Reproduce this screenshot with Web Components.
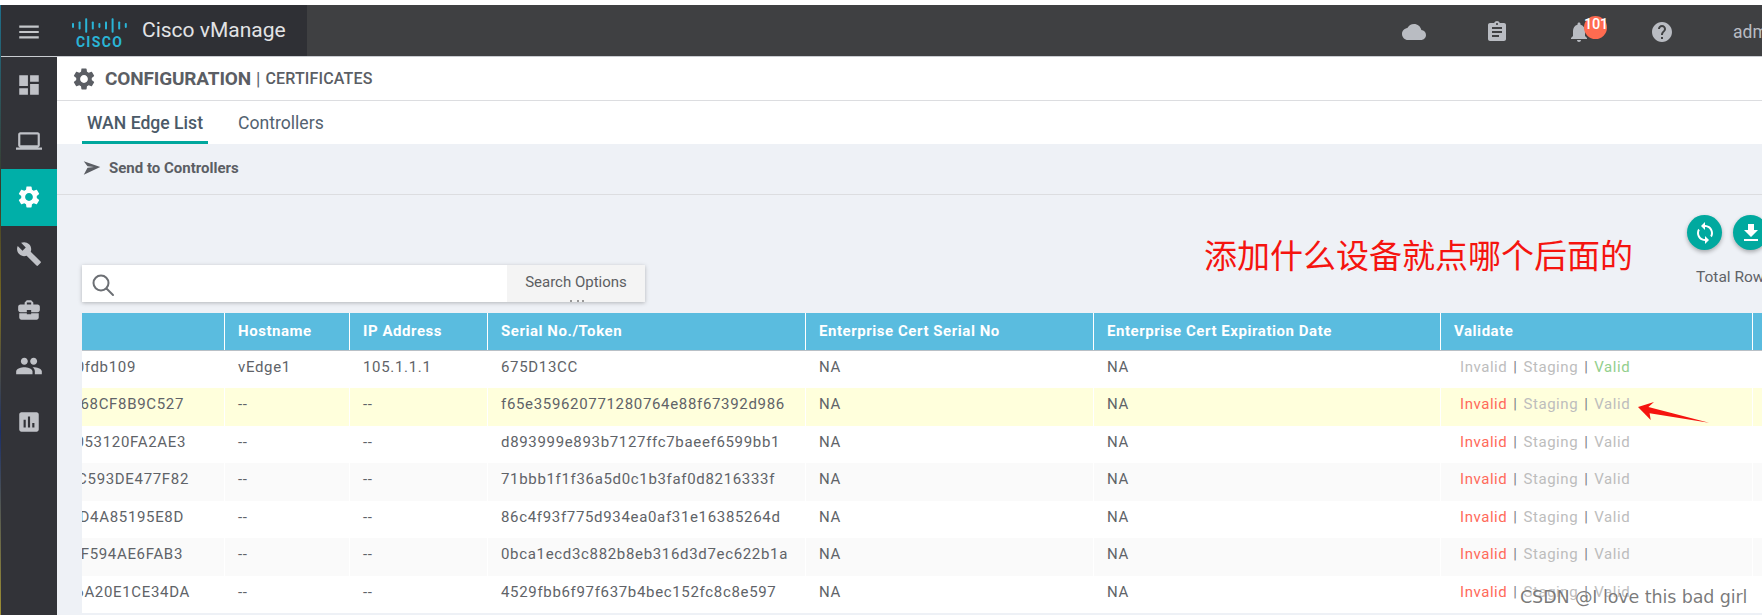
<!DOCTYPE html>
<html><head><meta charset="utf-8">
<style>
html,body{margin:0;padding:0;height:615px;width:1762px;overflow:hidden;background:#fff;font-family:Roboto,"Liberation Sans",sans-serif;}
</style></head><body>
<vm-app></vm-app>
<script>
const P={
menu:'<path d="M3 18h18v-2H3v2zm0-5h18v-2H3v2zm0-7v2h18V6H3z"/>',
dash:'<path d="M3 13h8V3H3v10zm0 8h8v-6H3v6zm10 0h8V11h-8v10zm0-18v6h8V3h-8z"/>',
laptop:'<path d="M20 18c1.1 0 2-.9 2-2V6c0-1.1-.9-2-2-2H4c-1.1 0-2 .9-2 2v10c0 1.1.9 2 2 2H0v2h24v-2h-4zM4 6h16v10H4V6z"/>',
gear:'<path d="M19.14 12.94c.04-.3.06-.61.06-.94 0-.32-.02-.64-.07-.94l2.03-1.58a.49.49 0 0 0 .12-.61l-1.92-3.32a.488.488 0 0 0-.59-.22l-2.39.96c-.5-.38-1.03-.7-1.62-.94l-.36-2.54a.484.484 0 0 0-.48-.41h-3.84c-.24 0-.43.17-.47.41l-.36 2.54c-.59.24-1.13.57-1.62.94l-2.39-.96c-.22-.08-.47 0-.59.22L2.74 8.87c-.12.21-.08.47.12.61l2.03 1.58c-.05.3-.09.63-.09.94s.02.64.07.94l-2.03 1.58a.49.49 0 0 0-.12.61l1.92 3.32c.12.22.37.29.59.22l2.39-.96c.5.38 1.03.7 1.62.94l.36 2.54c.05.24.24.41.48.41h3.84c.24 0 .44-.17.47-.41l.36-2.54c.59-.24 1.13-.56 1.62-.94l2.39.96c.22.08.47 0 .59-.22l1.92-3.32c.12-.22.07-.47-.12-.61l-2.01-1.58zM12 15.6c-1.98 0-3.6-1.62-3.6-3.6s1.62-3.6 3.6-3.6 3.6 1.62 3.6 3.6-1.62 3.6-3.6 3.6z"/>',
wrench:'<path d="M22.7 19l-9.1-9.1c.9-2.3.4-5-1.5-6.9-2-2-5-2.4-7.4-1.3L9 6 6 9 1.6 4.7C.4 7.1.9 10.1 2.9 12.1c1.9 1.9 4.6 2.4 6.9 1.5l9.1 9.1c.4.4 1 .4 1.4 0l2.3-2.3c.5-.4.5-1.1.1-1.4z"/>',
case:'<path d="M10 16v-1H3.01L3 19c0 1.11.89 2 2 2h14c1.11 0 2-.89 2-2v-4h-7v1h-4zm10-9h-4.01V5l-2-2h-4l-2 2v2H4c-1.1 0-2 .9-2 2v3c0 1.11.89 2 2 2h6v-2h4v2h6c1.1 0 2-.9 2-2V9c0-1.1-.9-2-2-2zm-6 0h-4V5h4v2z"/>',
people:'<path d="M16 11c1.66 0 2.99-1.34 2.99-3S17.66 5 16 5c-1.66 0-3 1.34-3 3s1.34 3 3 3zm-8 0c1.66 0 2.99-1.34 2.99-3S9.66 5 8 5C6.34 5 5 6.34 5 8s1.34 3 3 3zm0 2c-2.33 0-7 1.17-7 3.5V19h14v-2.5c0-2.33-4.67-3.5-7-3.5zm8 0c-.29 0-.62.02-.97.05 1.16.84 1.97 1.97 1.97 3.45V19h6v-2.5c0-2.33-4.67-3.5-7-3.5z"/>',
chart:'<path d="M19 3H5c-1.1 0-2 .9-2 2v14c0 1.1.9 2 2 2h14c1.1 0 2-.9 2-2V5c0-1.1-.9-2-2-2zM9 17H7v-7h2v7zm4 0h-2V7h2v10zm4 0h-2v-4h2v4z"/>',
cloud:'<path d="M19.35 10.04C18.67 6.59 15.64 4 12 4 9.11 4 6.6 5.64 5.35 8.04 2.34 8.36 0 10.91 0 14c0 3.31 2.69 6 6 6h13c2.76 0 5-2.24 5-5 0-2.64-2.05-4.78-4.65-4.96z"/>',
clip:'<path d="M19 3h-4.18C14.4 1.84 13.3 1 12 1c-1.3 0-2.4.84-2.82 2H5c-1.1 0-2 .9-2 2v14c0 1.1.9 2 2 2h14c1.1 0 2-.9 2-2V5c0-1.1-.9-2-2-2zm-7 0c.55 0 1 .45 1 1s-.45 1-1 1-1-.45-1-1 .45-1 1-1zm2 14H7v-2h7v2zm3-4H7v-2h10v2zm0-4H7V7h10v2z"/>',
bell:'<path d="M12 22c1.1 0 2-.9 2-2h-4c0 1.1.9 2 2 2zm6-6v-5c0-3.07-1.63-5.64-4.5-6.32V4c0-.83-.67-1.5-1.5-1.5s-1.5.67-1.5 1.5v.68C7.64 5.36 6 7.92 6 11v5l-2 2v1h16v-1l-2-2z"/>',
help:'<path d="M12 2C6.48 2 2 6.48 2 12s4.48 10 10 10 10-4.48 10-10S17.52 2 12 2zm1 17h-2v-2h2v2zm2.07-7.75l-.9.92C13.45 12.9 13 13.5 13 15h-2v-.5c0-1.1.45-2.1 1.17-2.83l1.24-1.26c.37-.36.59-.86.59-1.41 0-1.1-.9-2-2-2s-2 .9-2 2H8c0-2.21 1.79-4 4-4s4 1.79 4 4c0 .88-.36 1.68-.93 2.25z"/>',
send:'<path d="M1 3l22 7.5L1 21l5-9.5L14.5 10.5 6 9.5z"/>',
sync:'<path d="M12 4V1L8 5l4 4V6c3.31 0 6 2.69 6 6 0 1.01-.25 1.97-.7 2.8l1.46 1.46C19.54 15.03 20 13.57 20 12c0-4.42-3.58-8-8-8zm0 14c-3.31 0-6-2.69-6-6 0-1.01.25-1.97.7-2.8L5.24 7.74C4.46 8.97 4 10.43 4 12c0 4.42 3.58 8 8 8v3l4-4-4-4v3z"/>',
down:'<path d="M19 9h-4V3H9v6H5l7 7 7-7zM5 18v2h14v-2H5z"/>'
};
class VmIcon extends HTMLElement{
 connectedCallback(){
  const s=this.getAttribute('size')||24;
  this.attachShadow({mode:'open'}).innerHTML=`<style>:host{display:inline-flex;flex:none;width:${s}px;height:${s}px;color:inherit}svg{width:100%;height:100%;fill:currentColor;display:block}</style><svg viewBox="0 0 24 24">${P[this.getAttribute('name')]}</svg>`;
 }
}
customElements.define('vm-icon',VmIcon);

class VmLogo extends HTMLElement{
 connectedCallback(){
  const bars=[3,5,9,5,3,5,9,5,3];
  this.attachShadow({mode:'open'}).innerHTML=`<style>:host{display:block;flex:none;width:55px;height:30px;margin-top:5px}
  .w{font:700 14px/14px Roboto,sans-serif;letter-spacing:1.3px;text-align:center;color:#2ab4d6;margin-top:2px}svg{display:block;width:55px;height:15px}</style>
  <svg viewBox="0 0 55 15">${bars.map((b,i)=>`<rect x="${i*6.6}" y="${7.5-b*.8}" width="2" height="${b*1.6}" rx=".8" fill="#2ab4d6"/>`).join('')}</svg><div class="w">CISCO</div>`;
 }
}
customElements.define('vm-logo',VmLogo);

class VmHeader extends HTMLElement{
 constructor(){super();this.attachShadow({mode:'open'}).innerHTML=`<style>
 :host{display:flex;height:51px;background:#3f4042;color:#b9bcc2;border-bottom:1px solid #c9ccd1;box-sizing:content-box;}
 .brand{width:306px;background:#2f3035;display:flex;align-items:center;box-sizing:border-box;}
 .ham{width:56px;display:flex;justify-content:center;color:#c4c6ca;margin-top:2px}
 .logo{margin-left:15px;margin-right:15px}
 .t{font:400 21px/24px Roboto,sans-serif;color:#e2e3e5;white-space:nowrap;margin-bottom:1px}
 .r{flex:1;display:flex;align-items:center;position:relative;min-width:0;overflow:hidden;padding-top:2px;box-sizing:border-box}
 .badge{position:absolute;left:1277px;top:11px;width:23px;height:23px;border-radius:50%;background:#ff6b50;color:#fff;font:500 14.5px/18px Roboto,sans-serif;text-align:center;letter-spacing:-.2px;white-space:nowrap}
 .adm{font:400 17.5px/20px Roboto,sans-serif;color:#b9bcc2;white-space:nowrap}
 </style>
 <div class="brand"><div class="ham"><vm-icon name="menu" size="26"></vm-icon></div><vm-logo class="logo"></vm-logo><div class="t">Cisco vManage</div></div>
 <div class="r">
  <vm-icon name="cloud" size="24" style="margin-left:1095px"></vm-icon>
  <vm-icon name="clip" size="24" style="margin-left:59px"></vm-icon>
  <vm-icon name="bell" size="24" style="margin-left:58px"></vm-icon>
  <vm-icon name="help" size="24" style="margin-left:59px"></vm-icon>
  <div class="adm" style="margin-left:59px">adm</div>
  <div class="badge">101</div>
 </div>`;}
}
customElements.define('vm-header',VmHeader);

class VmSide extends HTMLElement{
 constructor(){super();
 const items=[['dash',0],['laptop',0],['gear',1],['wrench',0],['case',0],['people',0],['chart',0]];
 this.attachShadow({mode:'open'}).innerHTML=`<style>
 :host{display:block;width:56px;background:#323338;color:#c0c2c7;flex:none}
 .it{height:56.2px;display:flex;align-items:center;justify-content:center}
 .on{background:#00afa8;color:#fff;}
 </style>`+items.map(i=>`<div class="it ${i[1]===1?'on':''}"><vm-icon name="${i[0]}" size="${i[0]==='people'?28:26}"></vm-icon></div>`).join('');}
}
customElements.define('vm-side',VmSide);

class VmTitle extends HTMLElement{
 constructor(){super();this.attachShadow({mode:'open'}).innerHTML=`<style>
 :host{display:flex;align-items:center;height:43px;background:#fff;border-bottom:1px solid #dcdde0;padding-left:14px;color:#5b5e64;}
 b{font:700 19px/24px Roboto,sans-serif;margin-left:8px;letter-spacing:-.15px;padding-top:1px}
 span{font:500 16px/24px Roboto,sans-serif;margin-left:5px;letter-spacing:.15px;padding-top:1px}
 i{font:400 18px/24px Roboto,sans-serif;margin-left:5px;color:#5b6570;font-style:normal;padding-top:1px}
 </style><vm-icon name="gear" size="26"></vm-icon><b>CONFIGURATION</b><i>|</i><span>CERTIFICATES</span>`;}
}
customElements.define('vm-title',VmTitle);

class VmTabs extends HTMLElement{
 constructor(){super();this.attachShadow({mode:'open'}).innerHTML=`<style>
 :host{display:flex;height:43px;background:#fff;padding-left:25px;box-sizing:border-box;}
 div{height:43px;box-sizing:border-box;font:400 17.6px/44px Roboto,sans-serif;color:#536270;white-space:nowrap}
 .a{font-weight:500;width:126px;text-align:center;border-bottom:3px solid #00a79d;color:#4b5a68}
 .b{margin-left:30px}
 </style><div class="a">WAN Edge List</div><div class="b">Controllers</div>`;}
}
customElements.define('vm-tabs',VmTabs);

class VmToolbar extends HTMLElement{
 constructor(){super();this.attachShadow({mode:'open'}).innerHTML=`<style>
 :host{display:flex;align-items:center;height:47px;padding-bottom:3px;background:#eef1f6;border-bottom:1px solid #dcdde0;padding-left:26px;box-sizing:content-box;color:#5b5e64;}
 span{font:700 15px/18px Roboto,sans-serif;margin-left:8px;white-space:nowrap}
 </style><vm-icon name="send" size="18"></vm-icon><span>Send to Controllers</span>`;}
}
customElements.define('vm-toolbar',VmToolbar);

class VmSearch extends HTMLElement{
 constructor(){super();this.attachShadow({mode:'open'}).innerHTML=`<style>
 :host{display:flex;width:563px;height:37px;background:#fff;box-shadow:0 1px 4px rgba(0,0,0,.25);color:#666;position:relative}
 .s{flex:none;width:24px;height:24px;margin:8px 0 0 9px}
 .f{flex:1}
 .b{width:138px;background:#f4f4f4;font:400 15px/35px Roboto,sans-serif;color:#5c5e62;text-align:center;height:37px;overflow:hidden;position:relative;white-space:nowrap}
 .b::after{content:"";position:absolute;left:63px;bottom:0;width:14px;height:2px;background:linear-gradient(90deg,#999 0 2px,transparent 2px 7px,#999 7px 9px,transparent 9px 12px,#999 12px 14px)}
 svg{display:block;width:100%;height:100%;fill:none;stroke:#6c6f74;stroke-width:2;stroke-linecap:round}
 </style><div class="s"><svg viewBox="0 0 24 24"><circle cx="10" cy="10" r="7.5"/><path d="M15.5 15.5L22 22"/></svg></div><div class="f"></div><div class="b">Search Options</div>`;}
}
customElements.define('vm-search',VmSearch);

class VmFab extends HTMLElement{
 connectedCallback(){this.attachShadow({mode:'open'}).innerHTML=`<style>
 :host{display:flex;flex:none;width:35px;height:35px;border-radius:50%;background:#00a99f;color:#fff;align-items:center;justify-content:center;box-shadow:0 2px 4px rgba(0,0,0,.3)}
 </style><vm-icon name="${this.getAttribute('name')}" size="24"></vm-icon>`;}
}
customElements.define('vm-fab',VmFab);

class VmTable extends HTMLElement{
 constructor(){super();
 const cols=[143,125,138,318,288,347,312,9];
 const head=['','Hostname','IP Address','Serial No./Token','Enterprise Cert Serial No','Enterprise Cert Expiration Date','Validate',''];
 const rows=[
 ['0fdb109','vEdge1','105.1.1.1','675D13CC',0,88],
 ['68CF8B9C527','--','--','f65e359620771280764e88f67392d986',1,40],
 ['053120FA2AE3','--','--','d893999e893b7127ffc7baeef6599bb1',2,38],
 ['C593DE477F82','--','--','71bbb1f1f36a5d0c1b3faf0d8216333f',2,35],
 ['D4A85195E8D','--','--','86c4f93f775d934ea0af31e16385264d',2,40],
 ['F594AE6FAB3','--','--','0bca1ecd3c882b8eb316d3d7ec622b1a',2,41],
 ['6A20E1CE34DA','--','--','4529fbb6f97f637b4bec152fc8c8e597',2,34]];
 const tmpl=cols.map(c=>c+'px').join(' ');
 const val=k=>`<span class="${k?'red':'off'}">Invalid</span><u>|</u><span class="off">Staging</span><u>|</u><span class="${k?'off':'grn'}">Valid</span>`;
 this.attachShadow({mode:'open'}).innerHTML=`<style>
 :host{display:block;overflow:hidden;font-family:Roboto,sans-serif}
 .h,.r{display:grid;grid-template-columns:${tmpl};}
 .h{height:38px;box-sizing:border-box;border-bottom:1.5px solid #b9c0c6;background:#5abcdf;color:#fff;font:700 15px/37px Roboto,sans-serif;letter-spacing:.55px}
 .h div{border-right:1.5px solid #fff;padding-left:13px;box-sizing:border-box;white-space:nowrap;overflow:hidden}
 .h div:first-child{padding:0}
 .r{height:37.45px;font:400 15px/32px Roboto,sans-serif;letter-spacing:.67px;color:#606368;background:#fff;}
 .r>div{padding-left:13px;border-right:1.5px solid transparent;box-sizing:border-box;white-space:nowrap;overflow:hidden}
 .r>div.id{padding-left:0;display:flex;justify-content:flex-end}
 .r>div.v{padding-left:19px;letter-spacing:.55px}
 .r:nth-child(even){background:#fafafa}
 .r.y{background:#ffffdc}
 .r.y>div{border-right-color:#fff}
 .r:nth-child(even)>div{border-right-color:#fff}
 .off{color:#bdbdbd}.red{color:#ff6a5a}.grn{color:#93cf8d}
 u{text-decoration:none;color:#7b7f85;margin:0 6px}
 </style><div class="h">${head.map(x=>`<div>${x}</div>`).join('')}</div>`+
 rows.map(r=>`<div class="r ${r[4]==1?'y':''}"><div class="id" style="padding-right:${r[5]}px"><span>${r[0]}</span></div><div>${r[1]}</div><div>${r[2]}</div><div>${r[3]}</div><div>NA</div><div>NA</div><div class="v">${val(r[4])}</div><div></div></div>`).join('');}
}
customElements.define('vm-table',VmTable);

class VmContent extends HTMLElement{
 constructor(){super();this.attachShadow({mode:'open'}).innerHTML=`<style>
 :host{display:block;position:relative;height:420px;background:#eef1f6;padding-left:25px;overflow:hidden}
 .top{display:flex;height:118px;position:relative}
 .sbar{padding-top:70px}
 .acts{position:absolute;left:1630px;top:20px;display:flex;gap:11px;width:200px}
 .total{position:absolute;left:1639px;top:73px;font:400 15.5px/18px Roboto,sans-serif;color:#5f6368;white-space:nowrap}
 .note{position:absolute;left:1147px;top:41px;font:400 33px/36px "Noto Sans CJK SC",sans-serif;color:#f5140f;white-space:nowrap}
 .wm{position:absolute;left:1463px;top:392px;font:400 17.5px/20px "DejaVu Sans",sans-serif;color:rgba(70,70,70,.72);white-space:nowrap;letter-spacing:-.1px;text-shadow:0 0 1px #fff}
 svg.arrow{position:absolute;left:1573px;top:205px;width:90px;height:30px;fill:#f5140f}
 </style>
 <div class="top"><div class="sbar"><vm-search></vm-search></div></div>
 <vm-table></vm-table>
 <div class="acts"><vm-fab name="sync"></vm-fab><vm-fab name="down"></vm-fab></div>
 <div class="total">Total Rows</div>
 <div class="note">添加什么设备就点哪个后面的</div>
 <svg class="arrow" viewBox="0 0 90 30"><path d="M24 2L18.4 7L79 22.7L19.6 13.3L20.7 20L8 7Z"/></svg>
 <div class="wm">CSDN @I love this bad girl</div>`;}
}
customElements.define('vm-content',VmContent);

class VmApp extends HTMLElement{
 constructor(){super();this.attachShadow({mode:'open'}).innerHTML=`<style>
 :host{display:block;width:1762px;height:615px;overflow:hidden;background:#fff;padding-top:5px;box-sizing:border-box}
 .edge{position:absolute;left:0;top:5px;width:1px;height:610px;background:linear-gradient(#1d6f8c,#3a3a2a 30%,#7a6a20 50%,#1b2f6a 70%,#a09030)}
 .main{display:flex;height:558px;margin-left:1px}
 .col{flex:1;min-width:0}
 </style>
 <vm-header style="margin-left:1px"></vm-header>
 <div class="main"><vm-side></vm-side><div class="col"><vm-title></vm-title><vm-tabs></vm-tabs><vm-toolbar></vm-toolbar><vm-content></vm-content></div></div>
 <div class="edge"></div>`;}
}
customElements.define('vm-app',VmApp);
</script>
</body></html>
